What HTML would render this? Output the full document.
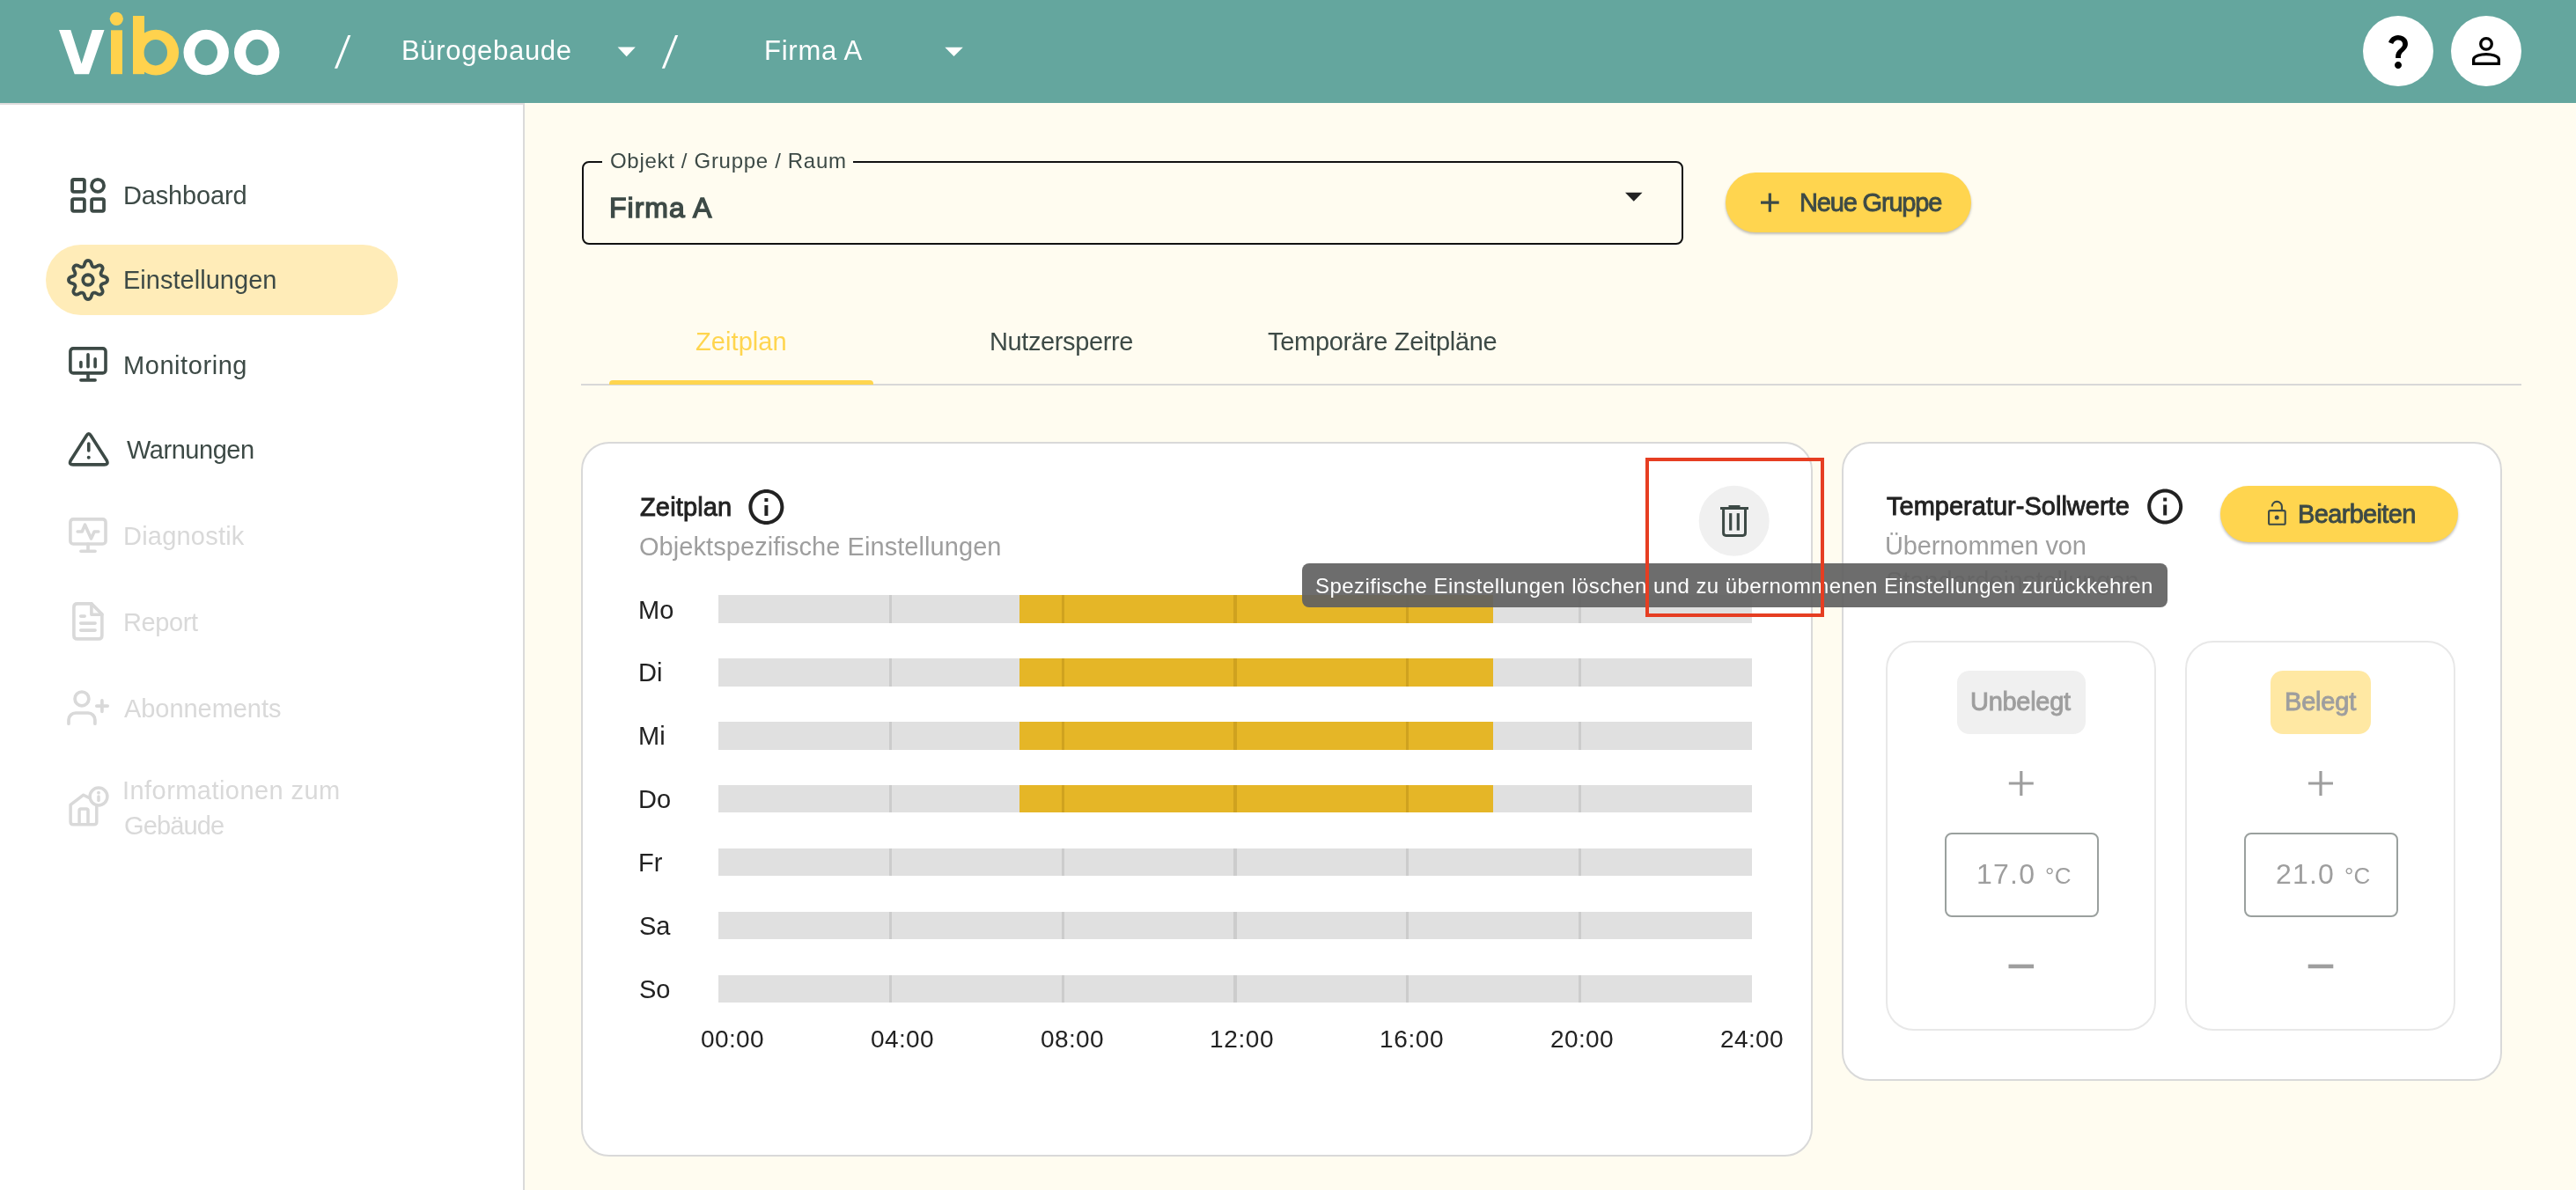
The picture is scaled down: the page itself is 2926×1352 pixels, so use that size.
<!DOCTYPE html><html><head><meta charset="utf-8"><title>viboo</title><style>
html,body{margin:0;padding:0;}
body{width:2926px;height:1352px;overflow:hidden;position:relative;background:#FFFCF0;font-family:'Liberation Sans', sans-serif;}
.t{position:absolute;white-space:pre;font-family:'Liberation Sans', sans-serif;will-change:transform;}
.b{position:absolute;}
.ov{position:absolute;left:0;top:0;}
</style></head><body>
<div class="b" style="left:0;top:0;width:2926px;height:117px;background:#64A69E;z-index:1"></div>
<div class="b" style="left:0;top:117.4px;width:594px;height:1235px;background:#FFFFFF;border-right:2px solid #DADADA;border-top:2.2px solid #DEDCDC"></div>
<div class="b" style="left:52px;top:278px;width:400px;height:80px;border-radius:40px;background:#FFECB8"></div>
<div class="b" style="left:660.5px;top:182.5px;width:1251.5px;height:95px;box-sizing:border-box;border:2.2px solid #111;border-radius:8px"></div>
<div class="b" style="left:683.5px;top:178px;width:285px;height:10px;background:#FFFCF0"></div>
<div class="b" style="left:1960px;top:196.2px;width:278.7px;height:67.5px;border-radius:34px;background:#FFD54F;box-shadow:0 2px 3px rgba(0,0,0,0.25)"></div>
<div class="b" style="left:660px;top:436px;width:2204px;height:2px;background:#D8D8D8"></div>
<div class="b" style="left:691.6px;top:431.5px;width:300.2px;height:5.5px;border-radius:4px 4px 0 0;background:#FFD54F"></div>
<div class="b" style="left:659.5px;top:501.5px;width:1399.5px;height:812px;box-sizing:border-box;border:2px solid #D9D9D9;border-radius:32px;background:#FFFFFF"></div>
<div class="b" style="left:2092px;top:501.5px;width:750px;height:726.5px;box-sizing:border-box;border:2px solid #D9D9D9;border-radius:32px;background:#FFFFFF"></div>
<div class="b" style="left:2141.8px;top:727.6px;width:307.4px;height:443.2px;box-sizing:border-box;border:2px solid #E8E8E8;border-radius:32px"></div>
<div class="b" style="left:2481.8px;top:727.6px;width:307.4px;height:443.2px;box-sizing:border-box;border:2px solid #E8E8E8;border-radius:32px"></div>
<div class="b" style="left:2223px;top:762px;width:146px;height:71.5px;border-radius:14px;background:#F0F0F0"></div>
<div class="b" style="left:2579.4px;top:762px;width:113.2px;height:71.5px;border-radius:14px;background:#FFE8A3"></div>
<div class="b" style="left:2208.8px;top:946.2px;width:175px;height:96px;box-sizing:border-box;border:2.2px solid #9AA09E;border-radius:8px"></div>
<div class="b" style="left:2548.5px;top:946.2px;width:175px;height:96px;box-sizing:border-box;border:2.2px solid #9AA09E;border-radius:8px"></div>
<div class="b" style="left:2522px;top:552px;width:270px;height:64px;border-radius:32px;background:#FFD54F;box-shadow:0 2px 3px rgba(0,0,0,0.25)"></div>
<div class="b" style="left:816px;top:676.40px;width:1174px;height:31.5px;background:#E0E0E0"></div>
<div class="b" style="left:1158.4px;top:676.40px;width:538.1px;height:31.5px;background:#E5B627"></div>
<div class="b" style="left:1010.07px;top:676.40px;width:3.2px;height:31.5px;background:#CCCCCC"></div>
<div class="b" style="left:1205.73px;top:676.40px;width:3.2px;height:31.5px;background:#CFA21F"></div>
<div class="b" style="left:1401.40px;top:676.40px;width:3.2px;height:31.5px;background:#CFA21F"></div>
<div class="b" style="left:1597.07px;top:676.40px;width:3.2px;height:31.5px;background:#CFA21F"></div>
<div class="b" style="left:1792.73px;top:676.40px;width:3.2px;height:31.5px;background:#CCCCCC"></div>
<div class="b" style="left:816px;top:748.25px;width:1174px;height:31.5px;background:#E0E0E0"></div>
<div class="b" style="left:1158.4px;top:748.25px;width:538.1px;height:31.5px;background:#E5B627"></div>
<div class="b" style="left:1010.07px;top:748.25px;width:3.2px;height:31.5px;background:#CCCCCC"></div>
<div class="b" style="left:1205.73px;top:748.25px;width:3.2px;height:31.5px;background:#CFA21F"></div>
<div class="b" style="left:1401.40px;top:748.25px;width:3.2px;height:31.5px;background:#CFA21F"></div>
<div class="b" style="left:1597.07px;top:748.25px;width:3.2px;height:31.5px;background:#CFA21F"></div>
<div class="b" style="left:1792.73px;top:748.25px;width:3.2px;height:31.5px;background:#CCCCCC"></div>
<div class="b" style="left:816px;top:820.10px;width:1174px;height:31.5px;background:#E0E0E0"></div>
<div class="b" style="left:1158.4px;top:820.10px;width:538.1px;height:31.5px;background:#E5B627"></div>
<div class="b" style="left:1010.07px;top:820.10px;width:3.2px;height:31.5px;background:#CCCCCC"></div>
<div class="b" style="left:1205.73px;top:820.10px;width:3.2px;height:31.5px;background:#CFA21F"></div>
<div class="b" style="left:1401.40px;top:820.10px;width:3.2px;height:31.5px;background:#CFA21F"></div>
<div class="b" style="left:1597.07px;top:820.10px;width:3.2px;height:31.5px;background:#CFA21F"></div>
<div class="b" style="left:1792.73px;top:820.10px;width:3.2px;height:31.5px;background:#CCCCCC"></div>
<div class="b" style="left:816px;top:891.95px;width:1174px;height:31.5px;background:#E0E0E0"></div>
<div class="b" style="left:1158.4px;top:891.95px;width:538.1px;height:31.5px;background:#E5B627"></div>
<div class="b" style="left:1010.07px;top:891.95px;width:3.2px;height:31.5px;background:#CCCCCC"></div>
<div class="b" style="left:1205.73px;top:891.95px;width:3.2px;height:31.5px;background:#CFA21F"></div>
<div class="b" style="left:1401.40px;top:891.95px;width:3.2px;height:31.5px;background:#CFA21F"></div>
<div class="b" style="left:1597.07px;top:891.95px;width:3.2px;height:31.5px;background:#CFA21F"></div>
<div class="b" style="left:1792.73px;top:891.95px;width:3.2px;height:31.5px;background:#CCCCCC"></div>
<div class="b" style="left:816px;top:963.80px;width:1174px;height:31.5px;background:#E0E0E0"></div>
<div class="b" style="left:1010.07px;top:963.80px;width:3.2px;height:31.5px;background:#CCCCCC"></div>
<div class="b" style="left:1205.73px;top:963.80px;width:3.2px;height:31.5px;background:#CCCCCC"></div>
<div class="b" style="left:1401.40px;top:963.80px;width:3.2px;height:31.5px;background:#CCCCCC"></div>
<div class="b" style="left:1597.07px;top:963.80px;width:3.2px;height:31.5px;background:#CCCCCC"></div>
<div class="b" style="left:1792.73px;top:963.80px;width:3.2px;height:31.5px;background:#CCCCCC"></div>
<div class="b" style="left:816px;top:1035.65px;width:1174px;height:31.5px;background:#E0E0E0"></div>
<div class="b" style="left:1010.07px;top:1035.65px;width:3.2px;height:31.5px;background:#CCCCCC"></div>
<div class="b" style="left:1205.73px;top:1035.65px;width:3.2px;height:31.5px;background:#CCCCCC"></div>
<div class="b" style="left:1401.40px;top:1035.65px;width:3.2px;height:31.5px;background:#CCCCCC"></div>
<div class="b" style="left:1597.07px;top:1035.65px;width:3.2px;height:31.5px;background:#CCCCCC"></div>
<div class="b" style="left:1792.73px;top:1035.65px;width:3.2px;height:31.5px;background:#CCCCCC"></div>
<div class="b" style="left:816px;top:1107.50px;width:1174px;height:31.5px;background:#E0E0E0"></div>
<div class="b" style="left:1010.07px;top:1107.50px;width:3.2px;height:31.5px;background:#CCCCCC"></div>
<div class="b" style="left:1205.73px;top:1107.50px;width:3.2px;height:31.5px;background:#CCCCCC"></div>
<div class="b" style="left:1401.40px;top:1107.50px;width:3.2px;height:31.5px;background:#CCCCCC"></div>
<div class="b" style="left:1597.07px;top:1107.50px;width:3.2px;height:31.5px;background:#CCCCCC"></div>
<div class="b" style="left:1792.73px;top:1107.50px;width:3.2px;height:31.5px;background:#CCCCCC"></div>
<svg class="ov" width="2926" height="1352" viewBox="0 0 2926 1352" style="z-index:2"><g fill="#FFFFFF"><path d="M67,34 L80.3,34 L92.6,72.5 L104.8,34 L118.5,34 L101,84.2 L84.7,84.2 Z"/></g><g fill="#FFD24D"><circle cx="132.3" cy="21.3" r="7.6"/><rect x="126" y="34.3" width="13" height="49.9"/><rect x="151" y="18" width="13" height="66.2"/><circle cx="177.2" cy="59.6" r="25.9"/><ellipse cx="176.8" cy="59.7" rx="13.2" ry="14.7" fill="#64A69E"/></g><g fill="#FFFFFF" fill-rule="evenodd"><path d="M234.2,33.8 A25.7,25.7 0 1 1 234.2,85.2 A25.7,25.7 0 1 1 234.2,33.8 Z M234.1,44.8 A12.9,14.8 0 1 0 234.1,74.4 A12.9,14.8 0 1 0 234.1,44.8 Z"/><path d="M291.7,33.8 A25.7,25.7 0 1 1 291.7,85.2 A25.7,25.7 0 1 1 291.7,33.8 Z M292.1,44.8 A12.9,14.8 0 1 0 292.1,74.4 A12.9,14.8 0 1 0 292.1,44.8 Z"/></g><g fill="#FFFFFF"><path d="M395.3,40 L398.4,40 L383.2,77.8 L380,77.8 Z"/><path d="M767,40 L770.2,40 L755,77.8 L751.8,77.8 Z"/><path d="M701.6,53.6 L721.8,53.6 L711.7,64.2 Z"/><path d="M1073.3,53.7 L1093.8,53.7 L1083.5,64.1 Z"/></g><circle cx="2724" cy="58" r="40" fill="#FFFFFF"/><circle cx="2824" cy="58" r="40" fill="#FFFFFF"/><path transform="translate(2700,34) scale(2)" fill="#000" d="M11.07 12.85c.77-1.39 2.25-2.21 3.11-3.44.91-1.29.4-3.7-2.18-3.7-1.69 0-2.52 1.28-2.87 2.34L6.54 6.96C7.25 4.83 9.18 3 11.99 3c2.35 0 3.96 1.07 4.78 2.41.7 1.15 1.11 3.3.03 4.9-1.2 1.77-2.35 2.31-2.97 3.45-.25.46-.35.76-.35 2.24h-2.89c-.01-.78-.13-2.05.48-3.15zM14 20c0 1.1-.9 2-2 2s-2-.9-2-2 .9-2 2-2 2 .9 2 2z"/><g fill="none" stroke="#000" stroke-width="3.3"><circle cx="2824" cy="49.9" r="6.3"/><path d="M2809.65,72.3 L2809.65,67.5 C2810,63.5 2818,61.6 2824,61.6 C2830,61.6 2838,63.5 2838.35,67.5 L2838.35,72.3 Z" stroke-linejoin="miter"/></g><g fill="none" stroke="#3D4A46" stroke-width="3.8" stroke-linecap="round" stroke-linejoin="round"><rect x="82.05" y="204" width="13.85" height="13.9" rx="1.8"/><circle cx="111.05" cy="210.9" r="7"/><rect x="82.05" y="226.1" width="13.85" height="13.7" rx="1.8"/><rect x="104.1" y="226.1" width="13.9" height="13.7" rx="1.8"/></g><path d="M122.00,318.00 L121.99,318.35 L121.94,318.69 L121.87,319.03 L121.75,319.37 L121.60,319.70 L121.40,320.02 L121.14,320.33 L120.82,320.63 L120.43,320.91 L119.98,321.16 L119.47,321.40 L118.92,321.61 L118.35,321.80 L117.80,321.98 L117.28,322.15 L116.82,322.32 L116.41,322.49 L116.07,322.67 L115.78,322.85 L115.53,323.05 L115.33,323.25 L115.16,323.46 L115.01,323.67 L114.89,323.89 L114.78,324.12 L114.69,324.36 L114.63,324.60 L114.58,324.86 L114.55,325.13 L114.55,325.42 L114.59,325.72 L114.66,326.06 L114.78,326.43 L114.94,326.84 L115.15,327.29 L115.40,327.77 L115.66,328.29 L115.93,328.82 L116.17,329.36 L116.36,329.89 L116.50,330.39 L116.58,330.86 L116.60,331.30 L116.56,331.70 L116.47,332.07 L116.35,332.41 L116.19,332.73 L116.00,333.03 L115.79,333.30 L115.56,333.56 L115.30,333.79 L115.03,334.00 L114.73,334.19 L114.41,334.35 L114.07,334.47 L113.70,334.56 L113.30,334.60 L112.86,334.58 L112.39,334.50 L111.89,334.36 L111.36,334.17 L110.82,333.93 L110.29,333.66 L109.77,333.40 L109.29,333.15 L108.84,332.94 L108.43,332.78 L108.06,332.66 L107.72,332.59 L107.42,332.55 L107.13,332.55 L106.86,332.58 L106.60,332.63 L106.36,332.69 L106.12,332.78 L105.89,332.89 L105.67,333.01 L105.46,333.16 L105.25,333.33 L105.05,333.53 L104.85,333.78 L104.67,334.07 L104.49,334.41 L104.32,334.82 L104.15,335.28 L103.98,335.80 L103.80,336.35 L103.61,336.92 L103.40,337.47 L103.16,337.98 L102.91,338.43 L102.63,338.82 L102.33,339.14 L102.02,339.40 L101.70,339.60 L101.37,339.75 L101.03,339.87 L100.69,339.94 L100.35,339.99 L100.00,340.00 L99.65,339.99 L99.31,339.94 L98.97,339.87 L98.63,339.75 L98.30,339.60 L97.98,339.40 L97.67,339.14 L97.37,338.82 L97.09,338.43 L96.84,337.98 L96.60,337.47 L96.39,336.92 L96.20,336.35 L96.02,335.80 L95.85,335.28 L95.68,334.82 L95.51,334.41 L95.33,334.07 L95.15,333.78 L94.95,333.53 L94.75,333.33 L94.54,333.16 L94.33,333.01 L94.11,332.89 L93.88,332.78 L93.64,332.69 L93.40,332.63 L93.14,332.58 L92.87,332.55 L92.58,332.55 L92.28,332.59 L91.94,332.66 L91.57,332.78 L91.16,332.94 L90.71,333.15 L90.23,333.40 L89.71,333.66 L89.18,333.93 L88.64,334.17 L88.11,334.36 L87.61,334.50 L87.14,334.58 L86.70,334.60 L86.30,334.56 L85.93,334.47 L85.59,334.35 L85.27,334.19 L84.97,334.00 L84.70,333.79 L84.44,333.56 L84.21,333.30 L84.00,333.03 L83.81,332.73 L83.65,332.41 L83.53,332.07 L83.44,331.70 L83.40,331.30 L83.42,330.86 L83.50,330.39 L83.64,329.89 L83.83,329.36 L84.07,328.82 L84.34,328.29 L84.60,327.77 L84.85,327.29 L85.06,326.84 L85.22,326.43 L85.34,326.06 L85.41,325.72 L85.45,325.42 L85.45,325.13 L85.42,324.86 L85.37,324.60 L85.31,324.36 L85.22,324.12 L85.11,323.89 L84.99,323.67 L84.84,323.46 L84.67,323.25 L84.47,323.05 L84.22,322.85 L83.93,322.67 L83.59,322.49 L83.18,322.32 L82.72,322.15 L82.20,321.98 L81.65,321.80 L81.08,321.61 L80.53,321.40 L80.02,321.16 L79.57,320.91 L79.18,320.63 L78.86,320.33 L78.60,320.02 L78.40,319.70 L78.25,319.37 L78.13,319.03 L78.06,318.69 L78.01,318.35 L78.00,318.00 L78.01,317.65 L78.06,317.31 L78.13,316.97 L78.25,316.63 L78.40,316.30 L78.60,315.98 L78.86,315.67 L79.18,315.37 L79.57,315.09 L80.02,314.84 L80.53,314.60 L81.08,314.39 L81.65,314.20 L82.20,314.02 L82.72,313.85 L83.18,313.68 L83.59,313.51 L83.93,313.33 L84.22,313.15 L84.47,312.95 L84.67,312.75 L84.84,312.54 L84.99,312.33 L85.11,312.11 L85.22,311.88 L85.31,311.64 L85.37,311.40 L85.42,311.14 L85.45,310.87 L85.45,310.58 L85.41,310.28 L85.34,309.94 L85.22,309.57 L85.06,309.16 L84.85,308.71 L84.60,308.23 L84.34,307.71 L84.07,307.18 L83.83,306.64 L83.64,306.11 L83.50,305.61 L83.42,305.14 L83.40,304.70 L83.44,304.30 L83.53,303.93 L83.65,303.59 L83.81,303.27 L84.00,302.97 L84.21,302.70 L84.44,302.44 L84.70,302.21 L84.97,302.00 L85.27,301.81 L85.59,301.65 L85.93,301.53 L86.30,301.44 L86.70,301.40 L87.14,301.42 L87.61,301.50 L88.11,301.64 L88.64,301.83 L89.18,302.07 L89.71,302.34 L90.23,302.60 L90.71,302.85 L91.16,303.06 L91.57,303.22 L91.94,303.34 L92.28,303.41 L92.58,303.45 L92.87,303.45 L93.14,303.42 L93.40,303.37 L93.64,303.31 L93.88,303.22 L94.11,303.11 L94.33,302.99 L94.54,302.84 L94.75,302.67 L94.95,302.47 L95.15,302.22 L95.33,301.93 L95.51,301.59 L95.68,301.18 L95.85,300.72 L96.02,300.20 L96.20,299.65 L96.39,299.08 L96.60,298.53 L96.84,298.02 L97.09,297.57 L97.37,297.18 L97.67,296.86 L97.98,296.60 L98.30,296.40 L98.63,296.25 L98.97,296.13 L99.31,296.06 L99.65,296.01 L100.00,296.00 L100.35,296.01 L100.69,296.06 L101.03,296.13 L101.37,296.25 L101.70,296.40 L102.02,296.60 L102.33,296.86 L102.63,297.18 L102.91,297.57 L103.16,298.02 L103.40,298.53 L103.61,299.08 L103.80,299.65 L103.98,300.20 L104.15,300.72 L104.32,301.18 L104.49,301.59 L104.67,301.93 L104.85,302.22 L105.05,302.47 L105.25,302.67 L105.46,302.84 L105.67,302.99 L105.89,303.11 L106.12,303.22 L106.36,303.31 L106.60,303.37 L106.86,303.42 L107.13,303.45 L107.42,303.45 L107.72,303.41 L108.06,303.34 L108.43,303.22 L108.84,303.06 L109.29,302.85 L109.77,302.60 L110.29,302.34 L110.82,302.07 L111.36,301.83 L111.89,301.64 L112.39,301.50 L112.86,301.42 L113.30,301.40 L113.70,301.44 L114.07,301.53 L114.41,301.65 L114.73,301.81 L115.03,302.00 L115.30,302.21 L115.56,302.44 L115.79,302.70 L116.00,302.97 L116.19,303.27 L116.35,303.59 L116.47,303.93 L116.56,304.30 L116.60,304.70 L116.58,305.14 L116.50,305.61 L116.36,306.11 L116.17,306.64 L115.93,307.18 L115.66,307.71 L115.40,308.23 L115.15,308.71 L114.94,309.16 L114.78,309.57 L114.66,309.94 L114.59,310.28 L114.55,310.58 L114.55,310.87 L114.58,311.14 L114.63,311.40 L114.69,311.64 L114.78,311.88 L114.89,312.11 L115.01,312.33 L115.16,312.54 L115.33,312.75 L115.53,312.95 L115.78,313.15 L116.07,313.33 L116.41,313.51 L116.82,313.68 L117.28,313.85 L117.80,314.02 L118.35,314.20 L118.92,314.39 L119.47,314.60 L119.98,314.84 L120.43,315.09 L120.82,315.37 L121.14,315.67 L121.40,315.98 L121.60,316.30 L121.75,316.63 L121.87,316.97 L121.94,317.31 L121.99,317.65Z" fill="none" stroke="#3D4A46" stroke-width="3.8" stroke-linejoin="round"/><circle cx="100" cy="318" r="5.75" fill="none" stroke="#3D4A46" stroke-width="3.8"/><g fill="none" stroke="#3D4A46" stroke-width="3.6" stroke-linecap="round" stroke-linejoin="round"><rect x="79.9" y="395.9" width="40.1" height="28" rx="3.3"/><path d="M100,424 V431.9 M91.9,431.9 H108.1 M91.9,411.5 V416.8 M100,402.7 V416.8 M108.1,407.7 V416.8"/></g><g fill="none" stroke="#3D4A46" stroke-width="3.6" stroke-linecap="round" stroke-linejoin="round"><path d="M98.2,495 Q100.75,490.8 103.3,495 L121.3,523.3 Q123.5,527.9 118.5,527.9 L83,527.9 Q78,527.9 80.2,523.3 Z"/><path d="M100.75,504 V512"/></g><circle cx="100.75" cy="519.8" r="2" fill="#3D4A46"/><g fill="none" stroke="#D9D9D9" stroke-width="3.6" stroke-linecap="round" stroke-linejoin="round"><rect x="79.9" y="589.9" width="40.1" height="28.1" rx="3.3"/><path d="M100,618 V626.2 M91.9,626.2 H108.1"/><path d="M88.15,604 H93.2 L96.5,596.2 L103.5,612 L107.1,604 H111.85"/></g><g fill="none" stroke="#D9D9D9" stroke-width="3.6" stroke-linecap="round" stroke-linejoin="round"><path d="M103.9,685.9 H87.9 Q83.9,685.9 83.9,689.9 V721.9 Q83.9,725.9 87.9,725.9 H111.85 Q115.85,725.9 115.85,721.9 V697.8 Z"/><path d="M103.9,685.9 V698.2 H115.85"/><path d="M91.7,700.1 H96.2 M91.7,708.1 H108.1 M91.7,716.1 H108.1"/></g><g fill="none" stroke="#D9D9D9" stroke-width="3.7" stroke-linecap="round" stroke-linejoin="round"><circle cx="92.95" cy="793.9" r="7.9"/><path d="M78,822.2 V818 A8,8 0 0 1 86,810 H100 A8,8 0 0 1 107.9,818 V822.2"/><path d="M109.8,802.1 H122.2 M115.9,795.9 V808.3"/></g><g fill="none" stroke="#D9D9D9" stroke-width="3.5" stroke-linecap="round" stroke-linejoin="round"><path d="M100.8,906.2 L94.8,903.2 L80.1,914.3 V933.7 Q80.1,936.7 83.1,936.7 H106.8 Q109.8,936.7 109.8,933.7 V915.3"/><path stroke-linecap="butt" d="M90.07,936.7 V921.1 Q90.07,919.1 92.07,919.1 H98 Q100,919.1 100,921.1 V936.7"/><circle cx="112" cy="905" r="9.9"/><path d="M112,905 V909.5"/></g><circle cx="112" cy="900.7" r="1.9" fill="#D9D9D9"/><path d="M1846,218.7 L1865.5,218.7 L1855.75,228.7 Z" fill="#222"/><path d="M2000,230.1 H2020.7 M2010.35,219.5 V240.7" stroke="#3D4A46" stroke-width="3.2" fill="none"/><path transform="translate(846.4,552) scale(2)" fill="#222222" d="M11 7h2v2h-2zm0 4h2v6h-2zm1-9C6.48 2 2 6.48 2 12s4.48 10 10 10 10-4.48 10-10S17.52 2 12 2zm0 18c-4.41 0-8-3.59-8-8s3.59-8 8-8 8 3.59 8 8-3.59 8-8 8z"/><path transform="translate(2435.2,551.6) scale(2)" fill="#222222" d="M11 7h2v2h-2zm0 4h2v6h-2zm1-9C6.48 2 2 6.48 2 12s4.48 10 10 10 10-4.48 10-10S17.52 2 12 2zm0 18c-4.41 0-8-3.59-8-8s3.59-8 8-8 8 3.59 8 8-3.59 8-8 8z"/><circle cx="1969.7" cy="591.7" r="40" fill="#F0F0F0"/><g fill="#3D4A46"><rect x="1954" y="576" width="32" height="3"/><rect x="1963.5" y="574" width="13" height="2.6"/><rect x="1964.1" y="583.1" width="3.2" height="19.5"/><rect x="1972.7" y="583.1" width="3.2" height="19.5"/></g><path d="M1957.6,578 V605.5 Q1957.6,608.4 1960.5,608.4 H1979.6 Q1982.5,608.4 1982.5,605.5 V578" fill="none" stroke="#3D4A46" stroke-width="3"/><g fill="none" stroke="#3D4A46" stroke-width="2.1"><rect x="2577.1" y="580.1" width="18.6" height="15.7" rx="1.6"/><path d="M2580.7,575.6 A5.6,5.6 0 0 1 2591.9,575.4 V580"/></g><circle cx="2586.2" cy="587.9" r="2.5" fill="#3D4A46"/><path d="M2281.8,890 H2309.8 M2295.8,876 V904" stroke="#9E9E9E" stroke-width="3.2" fill="none"/><rect x="2281.5" y="1095.6" width="28.6" height="4.6" fill="#9E9E9E"/><path d="M2622.0,890 H2650.0 M2636.0,876 V904" stroke="#9E9E9E" stroke-width="3.2" fill="none"/><rect x="2621.7" y="1095.6" width="28.6" height="4.6" fill="#9E9E9E"/></svg>
<div class="t" style="left:455.50px;top:11.00px;font-size:31px;line-height:93px;font-weight:400;color:#FFFFFF;letter-spacing:0.680px;z-index:3">Bürogebaude</div>
<div class="t" style="left:867.60px;top:10.80px;font-size:31px;line-height:93px;font-weight:400;color:#FFFFFF;letter-spacing:0.750px;z-index:3">Firma A</div>
<div class="t" style="left:139.70px;top:179.10px;font-size:29px;line-height:87px;font-weight:400;color:#3D4A46;letter-spacing:-0.163px;z-index:3">Dashboard</div>
<div class="t" style="left:139.70px;top:274.90px;font-size:29px;line-height:87px;font-weight:400;color:#3D4A46;letter-spacing:0.025px;z-index:3">Einstellungen</div>
<div class="t" style="left:139.70px;top:371.50px;font-size:29px;line-height:87px;font-weight:400;color:#3D4A46;letter-spacing:0.567px;z-index:3">Monitoring</div>
<div class="t" style="left:143.50px;top:468.20px;font-size:29px;line-height:87px;font-weight:400;color:#3D4A46;letter-spacing:-0.462px;z-index:3">Warnungen</div>
<div class="t" style="left:139.70px;top:566.00px;font-size:29px;line-height:87px;font-weight:400;color:#D9D9D9;letter-spacing:0.211px;z-index:3">Diagnostik</div>
<div class="t" style="left:139.70px;top:664.30px;font-size:29px;line-height:87px;font-weight:400;color:#D9D9D9;letter-spacing:-0.380px;z-index:3">Report</div>
<div class="t" style="left:140.70px;top:761.90px;font-size:29px;line-height:87px;font-weight:400;color:#D9D9D9;letter-spacing:-0.050px;z-index:3">Abonnements</div>
<div class="t" style="left:138.70px;top:854.90px;font-size:29px;line-height:87px;font-weight:400;color:#D9D9D9;letter-spacing:0.444px;z-index:3">Informationen zum</div>
<div class="t" style="left:140.70px;top:894.60px;font-size:29px;line-height:87px;font-weight:400;color:#D9D9D9;letter-spacing:-0.867px;z-index:3">Gebäude</div>
<div class="t" style="left:693.00px;top:147.20px;font-size:24px;line-height:72px;font-weight:400;color:#3D4A46;letter-spacing:0.690px;z-index:3">Objekt / Gruppe / Raum</div>
<div class="t" style="left:692.00px;top:187.50px;font-size:32px;line-height:96px;font-weight:400;-webkit-text-stroke:1.4px currentColor;color:#3D4A46;letter-spacing:1.000px;z-index:3">Firma A</div>
<div class="t" style="left:2043.70px;top:186.50px;font-size:29px;line-height:87px;font-weight:400;-webkit-text-stroke:0.9px currentColor;color:#3D4A46;letter-spacing:-1.170px;z-index:3">Neue Gruppe</div>
<div class="t" style="left:790.30px;top:345.20px;font-size:29px;line-height:87px;font-weight:400;color:#FFD54F;letter-spacing:0.071px;z-index:3">Zeitplan</div>
<div class="t" style="left:1124.00px;top:345.20px;font-size:29px;line-height:87px;font-weight:400;color:#3D4A46;letter-spacing:-0.391px;z-index:3">Nutzersperre</div>
<div class="t" style="left:1439.60px;top:345.20px;font-size:29px;line-height:87px;font-weight:400;color:#3D4A46;letter-spacing:-0.294px;z-index:3">Temporäre Zeitpläne</div>
<div class="t" style="left:727.00px;top:533.00px;font-size:29px;line-height:87px;font-weight:400;-webkit-text-stroke:0.9px currentColor;color:#222222;letter-spacing:0.143px;z-index:3">Zeitplan</div>
<div class="t" style="left:726.00px;top:578.20px;font-size:29px;line-height:87px;font-weight:400;color:#9E9E9E;letter-spacing:0.067px;z-index:3">Objektspezifische Einstellungen</div>
<div class="t" style="left:725.00px;top:649.50px;font-size:29px;line-height:87px;font-weight:400;color:#222222;letter-spacing:0.000px;z-index:3">Mo</div>
<div class="t" style="left:725.00px;top:721.35px;font-size:29px;line-height:87px;font-weight:400;color:#222222;letter-spacing:0.000px;z-index:3">Di</div>
<div class="t" style="left:725.00px;top:793.20px;font-size:29px;line-height:87px;font-weight:400;color:#222222;letter-spacing:0.000px;z-index:3">Mi</div>
<div class="t" style="left:725.00px;top:865.05px;font-size:29px;line-height:87px;font-weight:400;color:#222222;letter-spacing:0.000px;z-index:3">Do</div>
<div class="t" style="left:725.00px;top:936.90px;font-size:29px;line-height:87px;font-weight:400;color:#222222;letter-spacing:0.000px;z-index:3">Fr</div>
<div class="t" style="left:726.00px;top:1008.75px;font-size:29px;line-height:87px;font-weight:400;color:#222222;letter-spacing:0.000px;z-index:3">Sa</div>
<div class="t" style="left:726.00px;top:1080.60px;font-size:29px;line-height:87px;font-weight:400;color:#222222;letter-spacing:0.000px;z-index:3">So</div>
<div class="t" style="left:796.20px;top:1139.00px;font-size:28px;line-height:84px;font-weight:400;color:#222222;letter-spacing:0.400px;z-index:3">00:00</div>
<div class="t" style="left:989.20px;top:1139.00px;font-size:28px;line-height:84px;font-weight:400;color:#222222;letter-spacing:0.400px;z-index:3">04:00</div>
<div class="t" style="left:1182.20px;top:1139.00px;font-size:28px;line-height:84px;font-weight:400;color:#222222;letter-spacing:0.400px;z-index:3">08:00</div>
<div class="t" style="left:1374.20px;top:1139.00px;font-size:28px;line-height:84px;font-weight:400;color:#222222;letter-spacing:0.650px;z-index:3">12:00</div>
<div class="t" style="left:1567.20px;top:1139.00px;font-size:28px;line-height:84px;font-weight:400;color:#222222;letter-spacing:0.650px;z-index:3">16:00</div>
<div class="t" style="left:1761.20px;top:1139.00px;font-size:28px;line-height:84px;font-weight:400;color:#222222;letter-spacing:0.400px;z-index:3">20:00</div>
<div class="t" style="left:1954.20px;top:1139.00px;font-size:28px;line-height:84px;font-weight:400;color:#222222;letter-spacing:0.400px;z-index:3">24:00</div>
<div class="t" style="left:2143.00px;top:532.10px;font-size:29px;line-height:87px;font-weight:400;-webkit-text-stroke:0.9px currentColor;color:#222222;letter-spacing:0.011px;z-index:3">Temperatur-Sollwerte</div>
<div class="t" style="left:2141.00px;top:576.50px;font-size:29px;line-height:87px;font-weight:400;color:#9E9E9E;letter-spacing:-0.123px;z-index:3">Übernommen von</div>
<div class="t" style="left:2142.00px;top:616.70px;font-size:29px;line-height:87px;font-weight:400;color:#9E9E9E;letter-spacing:-0.050px;z-index:3">Standardeinstellungen</div>
<div class="t" style="left:2609.80px;top:540.60px;font-size:29px;line-height:87px;font-weight:400;-webkit-text-stroke:0.9px currentColor;color:#3D4A46;letter-spacing:-0.656px;z-index:3">Bearbeiten</div>
<div class="t" style="left:2238.00px;top:754.00px;font-size:29px;line-height:87px;font-weight:400;-webkit-text-stroke:0.9px currentColor;color:#9E9E9E;letter-spacing:-0.286px;z-index:3">Unbelegt</div>
<div class="t" style="left:2594.50px;top:754.00px;font-size:29px;line-height:87px;font-weight:400;-webkit-text-stroke:0.9px currentColor;color:#9E9E9E;letter-spacing:-0.200px;z-index:3">Belegt</div>
<div class="t" style="left:2245.00px;top:945.00px;font-size:32px;line-height:96px;font-weight:400;color:#9E9E9E;letter-spacing:1.233px;z-index:3">17.0</div>
<div class="t" style="left:2322.50px;top:956.00px;font-size:26px;line-height:78px;font-weight:400;color:#9E9E9E;letter-spacing:0.400px;z-index:3">°C</div>
<div class="t" style="left:2584.80px;top:945.00px;font-size:32px;line-height:96px;font-weight:400;color:#9E9E9E;letter-spacing:1.200px;z-index:3">21.0</div>
<div class="t" style="left:2662.50px;top:956.00px;font-size:26px;line-height:78px;font-weight:400;color:#9E9E9E;letter-spacing:0.100px;z-index:3">°C</div>
<div class="t" style="left:1493.80px;top:630.00px;font-size:24px;line-height:72px;font-weight:400;color:#FFFFFF;letter-spacing:0.424px;z-index:21">Spezifische Einstellungen löschen und zu übernommenen Einstellungen zurückkehren</div>
<div class="b" style="left:1478.6px;top:640.2px;width:983px;height:49.5px;border-radius:8px;background:rgba(97,97,97,0.92);z-index:20"></div>
<div class="b" style="left:1869.2px;top:520.4px;width:203.3px;height:180.2px;box-sizing:border-box;border:4.6px solid #E63E22;z-index:30"></div>
</body></html>
